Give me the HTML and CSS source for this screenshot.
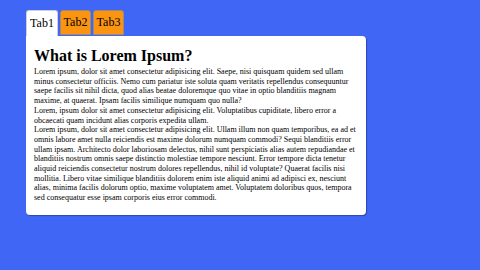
FILE: index.html
```html
<!DOCTYPE html>
<html lang="en">
  <head>
    <meta charset="UTF-8" />
    <meta name="viewport" content="width=device-width, initial-scale=1.0" />
    <title>Tabs</title>
    <link rel="stylesheet" href="styles.css">
  </head>
  <body>
    <div class="tabs">
      <div class="tab-bar">
        <button class="tab active">Tab1</button>
        <button class="tab">Tab2</button>
        <button class="tab">Tab3</button>
      </div>

      <div class="tab-content">
        <h1>What is Lorem Ipsum?</h1>
        <p>Lorem ipsum, dolor sit amet consectetur adipisicing elit. Saepe, nisi quisquam quidem sed ullam minus consectetur officiis. Nemo cum pariatur iste soluta quam veritatis repellendus consequuntur saepe facilis sit nihil dicta, quod alias beatae doloremque quo vitae in optio blanditiis magnam maxime, at quaerat. Ipsam facilis similique numquam quo nulla?</p>
        <p>Lorem, ipsum dolor sit amet consectetur adipisicing elit. Voluptatibus cupiditate, libero error a obcaecati quam incidunt alias corporis expedita ullam.</p>
        <p>Lorem ipsum, dolor sit amet consectetur adipisicing elit. Ullam illum non quam temporibus, ea ad et omnis labore amet nulla reiciendis est maxime dolorum numquam commodi? Sequi blanditiis error ullam ipsam. Architecto dolor laboriosam delectus, nihil sunt perspiciatis alias autem repudiandae et blanditiis nostrum omnis saepe distinctio molestiae tempore nesciunt. Error tempore dicta tenetur aliquid reiciendis consectetur nostrum dolores repellendus, nihil id voluptate? Quaerat facilis nisi mollitia. Libero vitae similique blanditiis dolorem enim iste aliquid animi ad adipisci ex, nesciunt alias, minima facilis dolorum optio, maxime voluptatem amet. Voluptatem doloribus quos, tempora sed consequatur esse ipsam corporis eius error commodi.</p>
      </div>
    </div>
  </body>
</html>
```

FILE: styles.css
```css
body {
  margin: 0;
  padding: 10px 26px;
  background-color: #4066f6;
  font-family: "Liberation Serif", "Times New Roman", serif;
  color: #000;
}

.tabs {
  width: 340px;
}

.tab-bar {
  display: flex;
  gap: 2px;
}

.tab {
  font-family: "Liberation Serif", "Times New Roman", serif;
  font-size: 12px;
  color: #000;
  width: 31px;
  height: 25px;
  padding: 0;
  margin: 0;
  background-color: #fb9410;
  border: 1px solid #a08a70;
  border-radius: 3px 3px 0 0;
  cursor: pointer;
}

.tab.active {
  width: 32px;
  height: 26px;
  background-color: #fff;
  border-color: #d0d0d0;
  border-bottom: none;
}

.tab-content {
  background-color: #fff;
  border-radius: 0 4px 4px 4px;
  box-shadow: 1px 1px 1px rgba(0, 0, 0, 0.3);
  padding: 8px 6px 12px 8px;
}

.tab-content h1 {
  font-family: "Liberation Serif", "Times New Roman", serif;
  margin: 3px 0 2px;
  font-size: 16px;
  line-height: 18px;
}

.tab-content p {
  margin: 0;
  font-size: 8px;
  line-height: 9.7px;
}
```
